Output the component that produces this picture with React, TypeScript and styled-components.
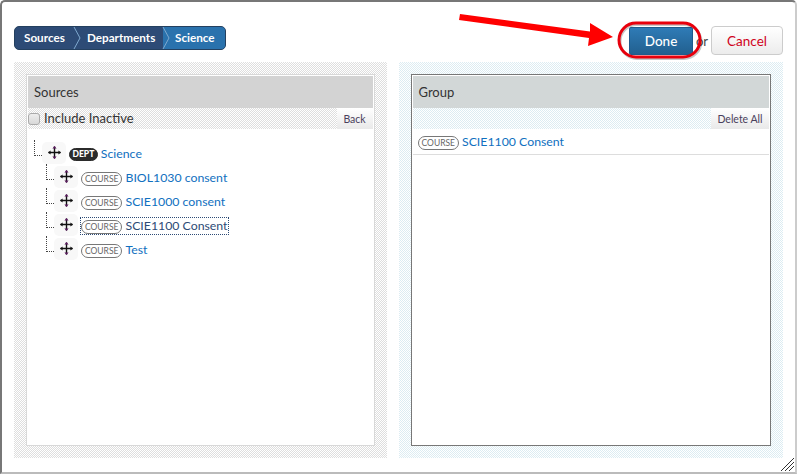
import styled, { createGlobalStyle } from 'styled-components';

const GlobalStyle = createGlobalStyle`
  html, body {
    margin: 0;
    padding: 0;
    background: #fff;
  }
  * {
    box-sizing: border-box;
  }
`

const Dialog = styled.div`
  position: relative;
  width: 797px;
  height: 474px;
  overflow: hidden;
  background: #fff;
  border-top: 2px solid #777;
  border-left: 2px solid #777;
  border-right: 2px solid #ccc;
  border-bottom: 2px solid #bbb;
  border-radius: 5px 5px 0 0;
  padding: 24px 12px 14px 12px;
  font-family: Lato, "Open Sans", sans-serif;
  color: #333;
`

const TopBar = styled.div`
  display: flex;
  justify-content: space-between;
  align-items: flex-start;
  height: 36px;
`

const Crumbs = styled.div`
  display: flex;
  height: 24px;
  border-radius: 5px;
  overflow: hidden;
  background: #2d4b76;
  border: 1px solid #24405f;
`

const Crumb = styled.div<{ $active?: boolean; $width: number; $pad: number }>`
  position: relative;
  width: ${p => p.$width}px;
  padding-left: ${p => p.$pad}px;
  font-size: 11.7px;
  font-weight: 700;
  line-height: 21px;
  color: #fff;
  background: ${p => (p.$active ? '#2a72ad' : 'transparent')};
`

const Chevron = styled.svg`
  position: absolute;
  left: -1px;
  top: 0;
  z-index: 1;
`

const Actions = styled.div`
  display: flex;
  align-items: center;
`

const DoneButton = styled.button`
  width: 64px;
  height: 28px;
  margin-top: 1px;
  border: 1px solid #1f5b8c;
  border-radius: 2px;
  background: linear-gradient(#2f7bb6, #22608f);
  color: #fff;
  font-family: inherit;
  font-size: 13.5px;
  font-weight: 500;
  padding: 0;
`

const OrText = styled.span`
  width: 18px;
  padding-left: 3px;
  font-size: 13px;
  color: #444;
`

const CancelButton = styled.button`
  width: 72px;
  height: 29px;
  border: 1px solid #ccc;
  border-radius: 4px;
  background: linear-gradient(#fff, #ececec);
  color: #d0021b;
  font-family: inherit;
  font-size: 13.5px;
  padding: 0;
`

const Columns = styled.div`
  display: flex;
  gap: 12px;
`

const Panel = styled.section<{ $tint: string; $width: number }>`
  width: ${p => p.$width}px;
  height: 396px;
  padding: 12px;
  background: repeating-conic-gradient(${p => p.$tint} 0 25%, #fff 0 50%) 0 0 / 2px 2px;
`

const Card = styled.div<{ $edge: string }>`
  display: flex;
  flex-direction: column;
  height: 100%;
  padding: 1px;
  background: #fff;
  border: 1px solid ${p => p.$edge};
`

const CardHeader = styled.div<{ $bg: string }>`
  height: 32px;
  padding-left: 6px;
  background: ${p => p.$bg};
  font-size: 13px;
  line-height: 33px;
  color: #333;
`

const Toolbar = styled.div<{ $tint: string }>`
  display: flex;
  justify-content: space-between;
  align-items: center;
  height: 21px;
  background: repeating-conic-gradient(${p => p.$tint} 0 25%, #fff 0 50%) 0 0 / 2px 2px;
`

const InactiveLabel = styled.label`
  display: flex;
  align-items: center;
  gap: 4px;
  font-size: 13px;
  line-height: 19px;
  color: #333;
`

const Check = styled.span`
  display: block;
  width: 12px;
  height: 12px;
  border: 1px solid #aaa;
  border-radius: 3px;
  background: linear-gradient(#eee, #d8d8d8);
`

const SmallButton = styled.button<{ $width: number }>`
  width: ${p => p.$width}px;
  height: 21px;
  border: 0;
  padding: 0;
  background: linear-gradient(#fff, #e9e9e9);
  color: #4a3f5c;
  font-family: inherit;
  font-size: 10.5px;
`

const Tree = styled.div`
  display: flex;
  flex-direction: column;
  padding: 12px 0 0 6px;
`

const TreeRow = styled.div<{ $depth: number }>`
  display: flex;
  align-items: center;
  height: 24px;
  padding-left: ${p => p.$depth * 12}px;
`

const Connector = styled.span`
  display: block;
  width: 8px;
  height: 16px;
  margin-bottom: 10px;
  border-left: 1px dotted #444;
  border-bottom: 1px dotted #444;
`

const Handle = styled.span`
  display: flex;
  align-items: center;
  justify-content: center;
  width: 24px;
  height: 22px;
  margin: 0 3px 0 0;
  border-radius: 5px;
  background: #f8f8f8;
  padding-bottom: 2px;
`

const Badge = styled.span<{ $dark?: boolean }>`
  display: inline-block;
  height: ${p => (p.$dark ? 13 : 14)}px;
  padding: 0 ${p => (p.$dark ? 2.5 : 3)}px;
  margin: 2px 3px 0 0;
  border: 1px solid ${p => (p.$dark ? '#2b2b2b' : '#777')};
  border-radius: 7px;
  background: ${p => (p.$dark ? '#2b2b2b' : '#fff')};
  color: ${p => (p.$dark ? '#fff' : '#666')};
  font-size: 8.5px;
  font-weight: ${p => (p.$dark ? 900 : 400)};
  line-height: ${p => (p.$dark ? 11 : 12)}px;
`

const NodeLink = styled.span<{ $focused?: boolean }>`
  display: inline-flex;
  align-items: flex-start;
  height: 16px;
  font-size: 12.3px;
  line-height: 16px;
  color: ${p => (p.$focused ? '#2d4b76' : '#1070c0')};
  outline: ${p => (p.$focused ? '1px dotted #2d4b76' : 'none')};
`

const TreeLink = styled(NodeLink)`
  margin-top: 2px;
`

const GroupItem = styled.div`
  display: flex;
  align-items: center;
  height: 26px;
  padding-left: 5px;
  border-bottom: 1px solid #ddd;
`

const Overlay = styled.svg`
  position: absolute;
  left: -2px;
  top: -2px;
  pointer-events: none;
`

const Grip = styled.svg`
  position: absolute;
  right: 0;
  bottom: 0;
`

const MoveIcon = () => (
  <svg width="13" height="13" viewBox="0 0 13 13">
    <path d="M6.500 0.500v12M0.500 6.500h12" stroke="#111" strokeWidth="1.4" />
    <path d="M6.500 0L4.400 2.600h4.200zM6.500 13l-2.100-2.600h4.200z" fill="#5a1a5e" />
    <path d="M0 6.500l2.600-2.100v4.200zM13 6.500l-2.600-2.100v4.200z" fill="#111" />
  </svg>
)

const CrumbEdge = () => (
  <Chevron width="9" height="22" viewBox="0 0 9 22">
    <path d="M1 0l6 11-6 11" fill="none" stroke="#7fa9cf" strokeWidth="1" />
  </Chevron>
)

const courses = ['BIOL1030 consent', 'SCIE1000 consent', 'SCIE1100 Consent', 'Test']

export default function App() {
  return (
    <>
      <GlobalStyle />
      <Dialog>
        <TopBar>
          <Crumbs>
            <Crumb $width={59} $pad={9}>Sources</Crumb>
            <Crumb $width={89} $pad={13}>
              <CrumbEdge />
              Departments
            </Crumb>
            <Crumb $width={62} $pad={12} $active>
              <CrumbEdge />
              Science
            </Crumb>
          </Crumbs>
          <Actions>
            <DoneButton>Done</DoneButton>
            <OrText>or</OrText>
            <CancelButton>Cancel</CancelButton>
          </Actions>
        </TopBar>
        <Columns>
          <Panel $tint="#dedede" $width={373}>
            <Card $edge="#d8d8d8">
              <CardHeader $bg="#d3d3d3">Sources</CardHeader>
              <Toolbar $tint="#dedede">
                <InactiveLabel>
                  <Check />
                  Include Inactive
                </InactiveLabel>
                <SmallButton $width={36}>Back</SmallButton>
              </Toolbar>
              <Tree>
                <TreeRow $depth={0}>
                  <Connector />
                  <Handle>
                    <MoveIcon />
                  </Handle>
                  <TreeLink>
                    <Badge $dark>DEPT</Badge>
                    Science
                  </TreeLink>
                </TreeRow>
                {courses.map(name => (
                  <TreeRow $depth={1} key={name}>
                    <Connector />
                    <Handle>
                      <MoveIcon />
                    </Handle>
                    <TreeLink $focused={name === 'SCIE1100 Consent'}>
                      <Badge>COURSE</Badge>
                      {name}
                    </TreeLink>
                  </TreeRow>
                ))}
              </Tree>
            </Card>
          </Panel>
          <Panel $tint="#dcecf2" $width={385}>
            <Card $edge="#777">
              <CardHeader $bg="#d2d7d7">Group</CardHeader>
              <Toolbar $tint="#dcecf2">
                <span />
                <SmallButton $width={58}>Delete All</SmallButton>
              </Toolbar>
              <GroupItem>
                <NodeLink>
                  <Badge>COURSE</Badge>
                  SCIE1100 Consent
                </NodeLink>
              </GroupItem>
            </Card>
          </Panel>
        </Columns>
        <Overlay width="797" height="474" viewBox="0 0 797 474">
          <path d="M460 14L590 31.500L590 23L613 37L588 46L589 38L459 20Z" fill="#f00" />
          <rect x="620" y="24.500" width="81" height="34" rx="17" fill="none" stroke="#000" strokeOpacity="0.22" strokeWidth="3" />
          <rect x="619" y="23" width="81" height="34" rx="17" fill="none" stroke="#e8000d" strokeWidth="3" />
        </Overlay>
        <Grip width="15" height="15" viewBox="0 0 15 15">
          <path d="M1 14L14 1M5 14l9-9M9 14l5-5" stroke="#333" strokeWidth="1" />
        </Grip>
      </Dialog>
    </>
  );
}
